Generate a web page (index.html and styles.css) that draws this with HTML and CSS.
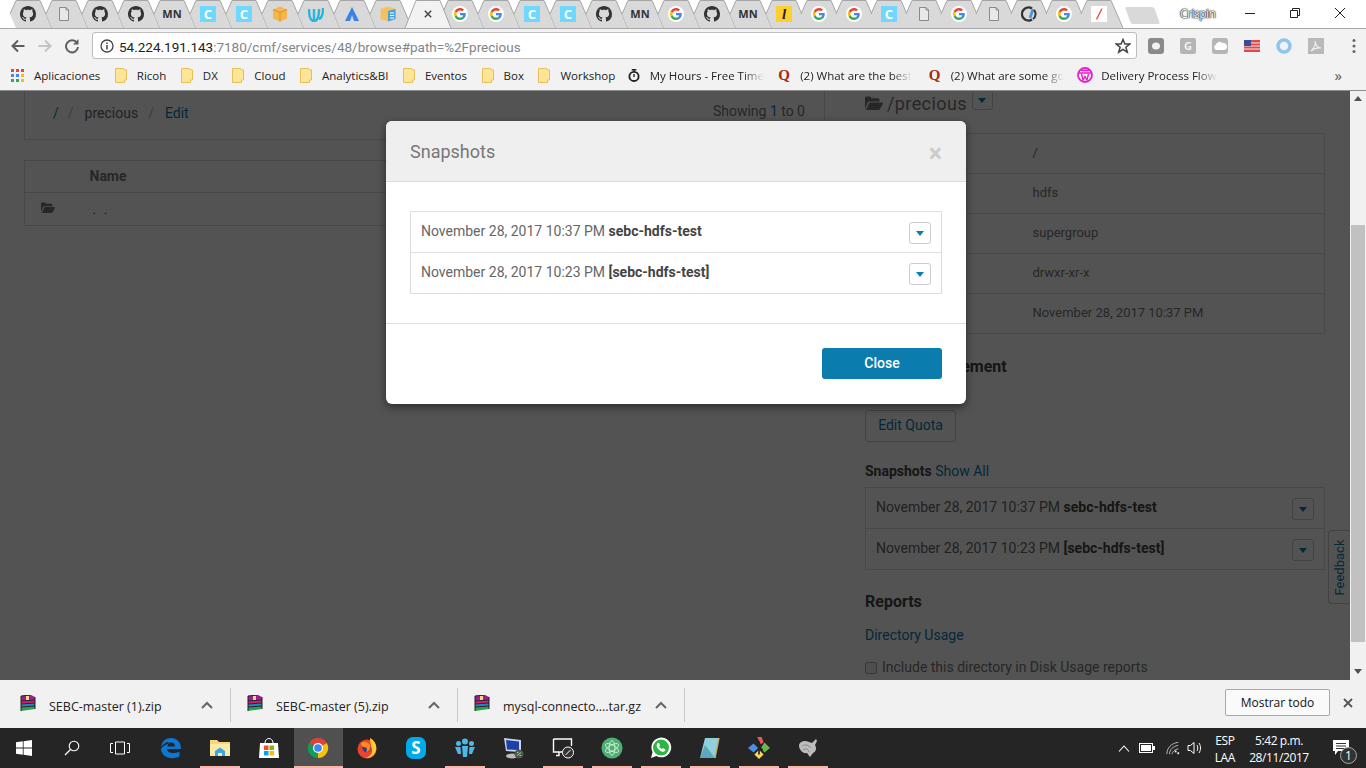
FILE: index.html
```html
<!DOCTYPE html>
<html lang="en">
<head>
  <meta charset="UTF-8">
  <title>Snapshots</title>
  <link rel="stylesheet" href="styles.css">
</head>
<body>

  <!-- shared icons -->
  <svg class="sprite" width="0" height="0">
    <symbol id="i-tab" viewBox="0 0 46 28"><path d="M4 14 10 0H34L46 28H10Z" fill="#d9d9d9"/><path d="M4 14 10 .5H34L46 28" fill="none" stroke="#a6a6a6"/></symbol>
    <symbol id="i-github" viewBox="0 0 16 16"><path fill="#333" d="M8 0C3.58 0 0 3.58 0 8c0 3.54 2.29 6.53 5.47 7.59.4.07.55-.17.55-.38 0-.19-.01-.82-.01-1.49-2.01.37-2.53-.49-2.69-.94-.09-.23-.48-.94-.82-1.13-.28-.15-.68-.52-.01-.53.63-.01 1.08.58 1.23.82.72 1.21 1.87.87 2.33.66.07-.52.28-.87.51-1.07-1.78-.2-3.64-.89-3.64-3.95 0-.87.31-1.59.82-2.15-.08-.2-.36-1.02.08-2.12 0 0 .67-.21 2.2.82.64-.18 1.32-.27 2-.27.68 0 1.36.09 2 .27 1.53-1.04 2.2-.82 2.2-.82.44 1.1.16 1.92.08 2.12.51.56.82 1.27.82 2.15 0 3.07-1.87 3.75-3.65 3.95.29.25.54.73.54 1.48 0 1.07-.01 1.93-.01 2.2 0 .21.15.46.55.38A8.013 8.013 0 0016 8c0-4.42-3.58-8-8-8z"/></symbol>
    <symbol id="i-page" viewBox="0 0 16 16"><path d="M3.5 1.5H10L12.5 4V14.5H3.5Z M10 1.5V4H12.5" fill="#e8e8e8" stroke="#8a8a8a"/></symbol>
    <symbol id="i-google" viewBox="-8 -8 64 64"><circle cx="24" cy="24" r="32" fill="#fff"/><path fill="#EA4335" d="M24 9.5c3.54 0 6.71 1.22 9.21 3.6l6.85-6.85C35.9 2.38 30.47 0 24 0 14.62 0 6.51 5.38 2.56 13.22l7.98 6.19C12.43 13.72 17.74 9.5 24 9.5z"/><path fill="#4285F4" d="M46.98 24.55c0-1.57-.15-3.09-.38-4.55H24v9.02h12.94c-.58 2.96-2.26 5.48-4.78 7.18l7.73 6c4.51-4.18 7.09-10.36 7.09-17.65z"/><path fill="#FBBC05" d="M10.53 28.59c-.48-1.45-.76-2.99-.76-4.59s.27-3.14.76-4.59l-7.98-6.19C.92 16.46 0 20.12 0 24c0 3.88.92 7.54 2.56 10.78l7.97-6.19z"/><path fill="#34A853" d="M24 48c6.48 0 11.93-2.13 16.09-5.81l-7.73-6c-2.15 1.45-4.92 2.3-8.37 2.3-6.26 0-11.57-4.22-13.47-9.91l-7.98 6.19C6.51 42.62 14.62 48 24 48z"/></symbol>
    <symbol id="i-folder" viewBox="0 0 12 15"><path d="M.5.5H8.500L9 1.500 11.500 2V12H9.500V14.500H.5Z" fill="#fde598" stroke="#e6bf58"/></symbol>
    <symbol id="i-open" viewBox="0 0 18 14"><path fill="currentColor" d="M0 13V2C0 1 .7.5 1.5.5H5L6.500 2.300H13C14 2.300 14.500 3 14.500 4V5.500H4.500C3.500 5.500 3 6 2.600 6.800ZM1 14 4 7.300C4.200 6.800 4.700 6.500 5.200 6.500H17C17.800 6.500 18.200 7.200 17.800 7.900L15 13C14.700 13.600 14.200 14 13.500 14Z"/></symbol>
    <symbol id="i-rar" viewBox="0 0 16 16"><path fill="#9c1f8f" d="M1 1 11 0 15 2V5L1 6Z"/><path fill="#d81b70" d="M1 6 15 5V8L1 9Z"/><path fill="#1e88c8" d="M1 9 15 8V11L1 12Z"/><path fill="#2e9e4f" d="M1 12 15 11V14L1 16Z"/><path stroke="#222" fill="none" d="M1 6 15 5M1 9 15 8M1 12 15 11M1 1V16M15 2V14M1 1 11 0"/><rect x="6" y="1" width="3" height="4" fill="#f0d98a"/></symbol>
    <symbol id="i-chev" viewBox="0 0 12 8"><path d="M1 7 6 2 11 7" fill="none" stroke="#666" stroke-width="2"/></symbol>
    <symbol id="i-caret" viewBox="0 0 8 5"><path d="M0 0H8L4 5Z" fill="currentColor"/></symbol>
  </svg>

  <header class="tab-strip">
    <div class="tab"><svg class="tab-bg"><use href="#i-tab"/></svg><svg class="fav"><use href="#i-github"/></svg></div>
    <div class="tab"><svg class="tab-bg"><use href="#i-tab"/></svg><svg class="fav"><use href="#i-page"/></svg></div>
    <div class="tab"><svg class="tab-bg"><use href="#i-tab"/></svg><svg class="fav"><use href="#i-github"/></svg></div>
    <div class="tab"><svg class="tab-bg"><use href="#i-tab"/></svg><svg class="fav"><use href="#i-github"/></svg></div>
    <div class="tab"><svg class="tab-bg"><use href="#i-tab"/></svg><span class="fav fav-mn">MN</span></div>
    <div class="tab"><svg class="tab-bg"><use href="#i-tab"/></svg><span class="fav fav-c">C</span></div>
    <div class="tab"><svg class="tab-bg"><use href="#i-tab"/></svg><span class="fav fav-c">C</span></div>
    <div class="tab"><svg class="tab-bg"><use href="#i-tab"/></svg>
      <svg class="fav" viewBox="0 0 16 16"><path d="M8 .5 15 3.500V12.500L8 15.500 1 12.500V3.500Z" fill="#f5b64c"/><path d="M8 6.500V15.500M1 3.500 8 6.500 15 3.500" stroke="#d9902a" fill="none"/></svg></div>
    <div class="tab"><svg class="tab-bg"><use href="#i-tab"/></svg>
      <svg class="fav" viewBox="0 0 16 16"><path d="M1 3C1 11 3 15 6 15V3M6 15C10 15 11 10 11 3M11 13C14 12 15 7 15 2" fill="none" stroke="#2bb5dc" stroke-width="2.400"/></svg></div>
    <div class="tab"><svg class="tab-bg"><use href="#i-tab"/></svg>
      <svg class="fav" viewBox="0 0 16 16"><path d="M8 1 15 15H10L8 9 6 15H1Z" fill="#3b82e8"/></svg></div>
    <div class="tab"><svg class="tab-bg"><use href="#i-tab"/></svg>
      <svg class="fav" viewBox="0 0 16 16"><path d="M8 .5 15.500 3V13L8 15.500 .5 13V3Z" fill="#f5c060"/><path d="M8 5 15.500 3V13L8 15.500Z" fill="#4aa3d8"/><path d="M10 7H14M10 9.500H14M10 12H14" stroke="#fff"/></svg></div>
    <div class="tab tab-active"><svg class="tab-bg tab-bg-active" viewBox="0 0 46 29"><path d="M0 28 11 .5H35L46 28" fill="#f2f2f2" stroke="#a6a6a6"/></svg>
      <svg class="fav fav-x" viewBox="0 0 10 10"><path d="M1 1 9 9M9 1 1 9" stroke="#444" stroke-width="1.800"/></svg></div>
    <div class="tab"><svg class="tab-bg"><use href="#i-tab"/></svg><svg class="fav"><use href="#i-google"/></svg></div>
    <div class="tab"><svg class="tab-bg"><use href="#i-tab"/></svg><svg class="fav"><use href="#i-google"/></svg></div>
    <div class="tab"><svg class="tab-bg"><use href="#i-tab"/></svg><span class="fav fav-c">C</span></div>
    <div class="tab"><svg class="tab-bg"><use href="#i-tab"/></svg><span class="fav fav-c">C</span></div>
    <div class="tab"><svg class="tab-bg"><use href="#i-tab"/></svg><svg class="fav"><use href="#i-github"/></svg></div>
    <div class="tab"><svg class="tab-bg"><use href="#i-tab"/></svg><span class="fav fav-mn">MN</span></div>
    <div class="tab"><svg class="tab-bg"><use href="#i-tab"/></svg><svg class="fav"><use href="#i-google"/></svg></div>
    <div class="tab"><svg class="tab-bg"><use href="#i-tab"/></svg><svg class="fav"><use href="#i-github"/></svg></div>
    <div class="tab"><svg class="tab-bg"><use href="#i-tab"/></svg><span class="fav fav-mn">MN</span></div>
    <div class="tab tab-thin"><svg class="tab-bg"><use href="#i-tab"/></svg><span class="fav fav-l">l</span></div>
    <div class="tab tab-thin"><svg class="tab-bg"><use href="#i-tab"/></svg><svg class="fav"><use href="#i-google"/></svg></div>
    <div class="tab tab-thin"><svg class="tab-bg"><use href="#i-tab"/></svg><svg class="fav"><use href="#i-google"/></svg></div>
    <div class="tab tab-thin"><svg class="tab-bg"><use href="#i-tab"/></svg><span class="fav fav-c">C</span></div>
    <div class="tab tab-thin"><svg class="tab-bg"><use href="#i-tab"/></svg><svg class="fav"><use href="#i-page"/></svg></div>
    <div class="tab tab-thin"><svg class="tab-bg"><use href="#i-tab"/></svg><svg class="fav"><use href="#i-google"/></svg></div>
    <div class="tab tab-thin"><svg class="tab-bg"><use href="#i-tab"/></svg><svg class="fav"><use href="#i-page"/></svg></div>
    <div class="tab tab-thin"><svg class="tab-bg"><use href="#i-tab"/></svg>
      <svg class="fav" viewBox="0 0 16 16"><path d="M11 2.500A6.500 6.500 0 1 0 11 13.500" fill="none" stroke="#333" stroke-width="2.400"/><path d="M9 12 12 3" stroke="#4a8fe8" stroke-width="2.600"/><path d="M13 4A6 6 0 0 1 12 13" fill="none" stroke="#333" stroke-width="2"/></svg></div>
    <div class="tab tab-thin"><svg class="tab-bg"><use href="#i-tab"/></svg><svg class="fav"><use href="#i-google"/></svg></div>
    <div class="tab tab-thin"><svg class="tab-bg"><use href="#i-tab"/></svg>
      <svg class="fav" viewBox="0 0 16 16"><rect width="16" height="16" fill="#fff"/><path d="M5 13 10 3 11.500 2 11 4 6 14Z" fill="#e8503a"/></svg></div>
    <div class="new-tab"></div>
    <span class="profile">Crispin</span>
    <div class="win-controls">
      <svg class="win-btn" viewBox="0 0 12 12"><path d="M1 6.500H11" stroke="#222"/></svg>
      <svg class="win-btn" viewBox="0 0 12 12"><path d="M1.500 3.500H8.500V10.500H1.500ZM3.500 3.500V1.500H10.500V8.500H8.500" fill="none" stroke="#222"/></svg>
      <svg class="win-btn" viewBox="0 0 12 12"><path d="M1 1 11 11M11 1 1 11" stroke="#222"/></svg>
    </div>
  </header>

  <div class="toolbar">
    <svg class="tool-icon" viewBox="0 0 16 16"><path d="M14.500 8H2.500M8 2.500 2.500 8 8 13.500" fill="none" stroke="#5f5f5f" stroke-width="2"/></svg>
    <svg class="tool-icon" viewBox="0 0 16 16"><path d="M1.500 8H13.500M8 2.500 13.500 8 8 13.500" fill="none" stroke="#c4c4c4" stroke-width="2"/></svg>
    <svg class="tool-icon" viewBox="0 0 16 16"><path d="M13 5A6 6 0 1 0 14 9" fill="none" stroke="#5f5f5f" stroke-width="2"/><path d="M14.500 1V6.500H9Z" fill="#5f5f5f"/></svg>
    <div class="omnibox">
      <svg class="info-icon" viewBox="0 0 14 14"><circle cx="7" cy="7" r="6" fill="none" stroke="#444" stroke-width="1.300"/><path d="M7 6V10.500M7 3.500V5" stroke="#444" stroke-width="1.500"/></svg>
      <span class="url"><span class="url-host">54.224.191.143</span>:7180/cmf/services/48/browse#path=%2Fprecious</span>
      <svg class="star" viewBox="0 0 16 16"><path d="M8 1.500 9.900 6H14.800L10.900 9.200 12.300 14.200 8 11.400 3.700 14.200 5.100 9.200 1.200 6H6.100Z" fill="none" stroke="#444" stroke-width="1.500"/></svg>
    </div>
    <div class="extensions">
      <svg class="ext" viewBox="0 0 16 16"><rect width="16" height="16" rx="3" fill="#8a8a8a"/><ellipse cx="8" cy="8" rx="4" ry="3.500" fill="#f2f2f2"/></svg>
      <span class="ext ext-g">G</span>
      <svg class="ext" viewBox="0 0 16 16"><rect width="16" height="16" rx="3" fill="#b5b5b5"/><path d="M4 12A3 3 0 0 1 4 6.500 3.500 3.500 0 0 1 10 5 3.500 3.500 0 0 1 12.500 12Z" fill="#fff"/></svg>
      <svg class="ext" viewBox="0 0 16 16"><rect y="2" width="16" height="12" fill="#e04a4a"/><path d="M0 5H16M0 8H16M0 11H16" stroke="#eee"/><rect y="2" width="7" height="6" fill="#3a4a9c"/></svg>
      <svg class="ext" viewBox="0 0 16 16"><circle cx="8" cy="8" r="6" fill="none" stroke="#8ec6ee" stroke-width="3.500"/></svg>
      <svg class="ext" viewBox="0 0 16 16"><rect width="16" height="16" fill="#b9b9b9"/><path d="M3 13C6 10 8 6 7 3 7 7 10 10 13 10 10 9.500 6 10.500 3 13Z" fill="none" stroke="#eee" stroke-width="1.200"/></svg>
      <svg class="kebab" viewBox="0 0 4 16"><circle cx="2" cy="2.500" r="1.500" fill="#666"/><circle cx="2" cy="8" r="1.500" fill="#666"/><circle cx="2" cy="13.500" r="1.500" fill="#666"/></svg>
    </div>
  </div>

  <nav class="bookmarks">
    <span class="bm">
      <svg class="bm-icon bm-apps" viewBox="0 0 13 13"><path fill="#e8453c" d="M0 0h3v3H0zM5 0h3v3H5zM10 0h3v3h-3z"/><path fill="#4285f4" d="M5 5h3v3H5zM0 5h3v3H0z"/><path fill="#fbbc05" d="M10 5h3v3h-3zM10 10h3v3h-3z"/><path fill="#34a853" d="M0 10h3v3H0zM5 10h3v3H5z"/></svg>
      Aplicaciones</span>
    <span class="bm"><svg class="bm-icon"><use href="#i-folder"/></svg>Ricoh</span>
    <span class="bm"><svg class="bm-icon"><use href="#i-folder"/></svg>DX</span>
    <span class="bm"><svg class="bm-icon"><use href="#i-folder"/></svg>Cloud</span>
    <span class="bm"><svg class="bm-icon"><use href="#i-folder"/></svg>Analytics&amp;BI</span>
    <span class="bm"><svg class="bm-icon"><use href="#i-folder"/></svg>Eventos</span>
    <span class="bm"><svg class="bm-icon"><use href="#i-folder"/></svg>Box</span>
    <span class="bm"><svg class="bm-icon"><use href="#i-folder"/></svg>Workshop</span>
    <span class="bm bm-fade bm-timer"><svg class="bm-icon" viewBox="0 0 13 14"><circle cx="6.500" cy="8" r="5" fill="none" stroke="#222" stroke-width="2"/><path d="M4 .8H9M6.500 1V3M6.500 5.500V8.500" stroke="#222" stroke-width="1.500"/></svg><span class="bm-clip">My Hours - Free Time</span></span>
    <span class="bm bm-fade"><span class="bm-icon bm-q">Q</span><span class="bm-clip">(2) What are the best</span></span>
    <span class="bm bm-fade bm-fade-short"><span class="bm-icon bm-q">Q</span><span class="bm-clip">(2) What are some go</span></span>
    <span class="bm bm-fade"><svg class="bm-icon bm-pink" viewBox="0 0 16 16"><circle cx="8" cy="8" r="7" fill="none" stroke="#e61fc9" stroke-width="1.800"/><path d="M1 6H15M4 3.500H12M4.500 7 6 13 8 9.500 10 13 11.500 7" fill="none" stroke="#e61fc9" stroke-width="1.400"/></svg><span class="bm-clip">Delivery Process Flow</span></span>
    <span class="bm-more">»</span>
  </nav>

  <div class="viewport">
    <main class="page">
      <div class="page-grid">
        <section class="left-col">
          <div class="crumb-panel">
            <div class="crumbs">
              <a class="link">/</a><span class="sep">/</span><span class="crumb-name">precious</span><span class="sep">/</span><a class="link">Edit</a>
            </div>
            <span class="showing">Showing <span class="link">1</span> to 0</span>
          </div>
          <table class="files">
            <tr><th class="files-icon"></th><th>Name</th></tr>
            <tr><td class="files-icon"><svg class="row-folder"><use href="#i-open"/></svg></td><td class="dots">. .</td></tr>
          </table>
        </section>

        <section class="right-col">
          <div class="dir-title">
            <svg class="dir-folder"><use href="#i-open"/></svg>
            <span class="dir-name">/precious</span>
            <span class="caret-btn caret-btn-top"><svg class="caret"><use href="#i-caret"/></svg></span>
          </div>
          <table class="info">
            <tr><td></td><td>/</td></tr>
            <tr><td></td><td>hdfs</td></tr>
            <tr><td></td><td>supergroup</td></tr>
            <tr><td></td><td>drwxr-xr-x</td></tr>
            <tr><td></td><td>November 28, 2017 10:37 PM</td></tr>
          </table>
          <h4 class="heading heading-quota">Quota Management</h4>
          <a class="quota-btn">Edit Quota</a>
          <p class="snap-title"><b>Snapshots</b> <a class="link">Show All</a></p>
          <ul class="snap-list">
            <li class="snap-row"><span>November 28, 2017 10:37 PM <b>sebc-hdfs-test</b></span><span class="caret-btn"><svg class="caret"><use href="#i-caret"/></svg></span></li>
            <li class="snap-row"><span>November 28, 2017 10:23 PM <b>[sebc-hdfs-test]</b></span><span class="caret-btn"><svg class="caret"><use href="#i-caret"/></svg></span></li>
          </ul>
          <h4 class="heading heading-reports">Reports</h4>
          <a class="link usage">Directory Usage</a>
          <label class="include"><span class="check"></span>Include this directory in Disk Usage reports</label>
        </section>
      </div>

      <a class="feedback"><span>Feedback</span></a>
      <div class="backdrop"></div>

      <div class="modal">
        <div class="modal-head">
          <h3>Snapshots</h3>
          <span class="modal-x">×</span>
        </div>
        <div class="modal-body">
          <ul class="snap-list">
            <li class="snap-row"><span>November 28, 2017 10:37 PM <b>sebc-hdfs-test</b></span><span class="caret-btn"><svg class="caret"><use href="#i-caret"/></svg></span></li>
            <li class="snap-row"><span>November 28, 2017 10:23 PM <b>[sebc-hdfs-test]</b></span><span class="caret-btn"><svg class="caret"><use href="#i-caret"/></svg></span></li>
          </ul>
        </div>
        <div class="modal-foot"><button class="close-btn">Close</button></div>
      </div>
    </main>

    <div class="scrollbar">
      <svg class="sb-arrow" viewBox="0 0 8 5"><path d="M0 5H8L4 0Z" fill="#505050"/></svg>
      <div class="sb-thumb"></div>
      <svg class="sb-arrow" viewBox="0 0 8 5"><path d="M0 0H8L4 5Z" fill="#505050"/></svg>
    </div>
  </div>

  <div class="downloads">
    <div class="dl"><svg class="dl-icon"><use href="#i-rar"/></svg><span class="dl-name">SEBC-master (1).zip</span><svg class="dl-chev"><use href="#i-chev"/></svg></div>
    <div class="dl"><svg class="dl-icon"><use href="#i-rar"/></svg><span class="dl-name">SEBC-master (5).zip</span><svg class="dl-chev"><use href="#i-chev"/></svg></div>
    <div class="dl"><svg class="dl-icon"><use href="#i-rar"/></svg><span class="dl-name">mysql-connecto....tar.gz</span><svg class="dl-chev"><use href="#i-chev"/></svg></div>
    <button class="show-all">Mostrar todo</button>
    <svg class="dl-close" viewBox="0 0 10 10"><path d="M1 1 9 9M9 1 1 9" stroke="#555" stroke-width="1.800"/></svg>
  </div>

  <footer class="taskbar">
    <div class="sys-btn"><svg class="task-icon" viewBox="0 0 16 16"><path fill="#fff" d="M0 2.300 6.800 1.300V7.600H0ZM7.600 1.200 16 0V7.600H7.600ZM0 8.400H6.800V14.700L0 13.700ZM7.600 8.400H16V16L7.600 14.800Z"/></svg></div>
    <div class="sys-btn"><svg class="task-icon" viewBox="0 0 16 16"><circle cx="10" cy="6" r="4.800" fill="none" stroke="#fff" stroke-width="1.100"/><path d="M6.500 9.500 1 15" stroke="#fff" stroke-width="1.300"/></svg></div>
    <div class="sys-btn"><svg class="task-icon task-view" viewBox="0 0 20 14"><path d="M5.500 1H14.500V13H5.500ZM3 2.500H.5V11.500H3M17 2.500H19.500V11.500H17" fill="none" stroke="#fff"/></svg></div>
    <div class="apps">
      <div class="app"><svg class="task-icon task-large" viewBox="0 0 22 22"><path fill="#0a78d4" d="M1 10C2 4 6 1 11 1c6 0 10 4 10 11H7c.3 4 6.500 5.500 12.500 2.500v5C12 23 2 21 1 12c2-3 4-4 7-5 0-1 .5-1.500 1-2C6 5 3 7 1 10ZM7.500 9.500h7.500C15 7 13.500 5.500 11 5.500S8 7 7.500 9.500Z"/></svg></div>
      <div class="app is-running"><svg class="task-icon task-large" viewBox="0 0 22 22"><path fill="#f5d77a" d="M1 3H8L10 5H21V19H1Z"/><path fill="#fbe9a8" d="M1 7H21V19H1Z"/><path fill="#3aa7e0" d="M6 14 11 10.500 16 14V19H13V16H9V19H6Z"/></svg></div>
      <div class="app"><svg class="task-icon task-large" viewBox="0 0 22 22"><path d="M7 6C7 0 15 0 15 6" fill="none" stroke="#fff"/><path fill="#fff" d="M2 6H20L21 21H1Z"/><path fill="#f25022" d="M6 8.500H10.500V13H6Z"/><path fill="#7fba00" d="M11.500 8.500H16V13H11.500Z"/><path fill="#00a4ef" d="M6 14H10.500V18.500H6Z"/><path fill="#ffb900" d="M11.500 14H16V18.500H11.500Z"/></svg></div>
      <div class="app is-active"><svg class="task-icon task-large" viewBox="0 0 24 24"><path fill="#db4437" d="M12 12 2.470 6.500A11 11 0 0 1 21.530 6.500Z"/><path fill="#f4c20d" d="M12 12 21.530 6.500A11 11 0 0 1 12 23Z"/><path fill="#0f9d58" d="M12 12 12 23A11 11 0 0 1 2.470 6.500Z"/><circle cx="12" cy="12" r="5.500" fill="#fff"/><circle cx="12" cy="12" r="4.200" fill="#4285f4"/></svg></div>
      <div class="app"><svg class="task-icon task-large" viewBox="0 0 22 22"><circle cx="11" cy="12" r="9.500" fill="#e8452c"/><path fill="#ffcb2e" d="M14 1C20 4 22 11 19 16 17 20 13 21.500 9 21 14 20 17 16 16 12 15 8 14 5 14 1Z"/><circle cx="10.500" cy="11" r="4.200" fill="#3d3a8c"/><path fill="#ff8a1f" d="M5 6C8 4 12 5 14 8 15 12 13 15 10 15 12 13 11 10 8 10 6 10 5 8 5 6Z"/></svg></div>
      <div class="app"><span class="skype">S</span></div>
      <div class="app is-running"><svg class="task-icon task-large" viewBox="0 0 22 22"><circle cx="11" cy="4.500" r="3" fill="#4db8e8"/><circle cx="4.500" cy="6.500" r="2.500" fill="#4db8e8"/><circle cx="17.500" cy="6.500" r="2.500" fill="#4db8e8"/><path fill="#4db8e8" d="M8 9H14L13 20H9ZM1 10H6.500L7 17H4ZM15.500 10H21L18 17H15Z"/></svg></div>
      <div class="app"><svg class="task-icon task-large" viewBox="0 0 22 22"><path fill="#c8d8f0" d="M1 1 18 3V15L3 14Z"/><path fill="#1f3fa8" d="M3 3 16 4.500V13L4 12.500Z"/><ellipse cx="9" cy="19" rx="6" ry="2.500" fill="#bbb"/><circle cx="16" cy="17" r="4.500" fill="#555"/><path d="M14 18.500 18 15.500M14 15.500H15.500M16.500 18.500H18" stroke="#8ddc6a"/></svg></div>
      <div class="app is-running"><svg class="task-icon task-large" viewBox="0 0 22 22"><path d="M1.500 2H19.500V9M11 15H1.500V2M7 15V18.500H4" fill="none" stroke="#fff" stroke-width="1.400"/><circle cx="16" cy="15.500" r="5.500" fill="#333" stroke="#fff"/><path d="M13.500 18 18.500 13" stroke="#fff"/></svg></div>
      <div class="app is-running"><svg class="task-icon task-large" viewBox="0 0 24 24"><circle cx="12" cy="12" r="11.500" fill="#4cb071"/><g fill="none" stroke="#d8f0df" stroke-width=".9"><ellipse cx="12" cy="12" rx="8" ry="3.200" transform="rotate(30 12 12)"/><ellipse cx="12" cy="12" rx="8" ry="3.200" transform="rotate(-30 12 12)"/><ellipse cx="12" cy="12" rx="8" ry="3.200" transform="rotate(90 12 12)"/></g></svg></div>
      <div class="app is-running"><svg class="task-icon task-large" viewBox="0 0 24 24"><path fill="#fff" d="M1 23 2.800 16.500A10.800 10.800 0 1 1 7 20.800Z"/><circle cx="12" cy="11.500" r="8.700" fill="#2cb742"/><path fill="#fff" d="M8.500 6.500C6.500 8 7 11 9.500 13.500S15 17 16.500 15L16.800 13.500 14 12 13 13C12 12.800 10.500 11.300 10 10L11 9 9.800 6.500Z"/></svg></div>
      <div class="app is-running"><svg class="task-icon task-large" viewBox="0 0 22 22"><path fill="#8fd0dc" d="M6 1H20L16 21H1Z"/><path fill="#3d8ea8" d="M1 21 6 8 16 21Z" opacity=".6"/><path d="M20 1 16 21" stroke="#c9a86a" stroke-width="1.400"/></svg></div>
      <div class="app is-running"><svg class="task-icon task-large" viewBox="0 0 24 24"><path fill="#e8565a" d="M10 0H15L17 6 14 8Z"/><path fill="#4a8fe8" d="M6 7 11 12 6 17 0 12Z"/><path fill="#6ab84e" d="M18 6 24 12 18 17 14 12Z"/><path fill="#f5d762" d="M12 14 17 19 12 24 7 19Z"/><path d="M12 5V19M12 11 16 14" stroke="#222" stroke-width="1.800" fill="none"/></svg></div>
      <div class="app is-running"><svg class="task-icon task-large" viewBox="0 0 22 22"><path fill="#bdbdbd" d="M2 8C3 4 8 3 12 5L15 6 19 2 20 4 18 8C20 11 19 15 16 16L13 20 10 16C6 17 2 13 2 8Z"/><path d="M5 9C8 7 12 8 14 11M6 13C9 11 11 12 12 15" stroke="#888" fill="none"/></svg></div>
    </div>
    <div class="tray">
      <svg class="tray-chev" viewBox="0 0 12 7"><path d="M1 6.500 6 1 11 6.500" fill="none" stroke="#fff" stroke-width="1.100"/></svg>
      <svg class="tray-batt" viewBox="0 0 16 10"><rect x=".5" y=".5" width="13" height="9" fill="none" stroke="#fff"/><rect x="2" y="2" width="10" height="6" fill="#fff"/><rect x="14" y="3" width="2" height="4" fill="#fff"/></svg>
      <svg class="tray-wifi" viewBox="0 0 16 16"><path d="M1 15C1 8 6 2.500 14 1.500M4 15C4 10 8 6 14 5M7 15C7 12.500 10 9.500 14 9" fill="none" stroke="#ccc"/><rect x="10" y="11" width="2" height="2" fill="#fff"/><rect x="13" y="13" width="2" height="2" fill="#fff"/></svg>
      <svg class="tray-vol" viewBox="0 0 16 16"><path d="M1 5.500H3.500L7 2.500V13.500L3.500 10.500H1Z M10 5C11 7 11 9 10 11M12 3C14 6 14 10 12 13" fill="none" stroke="#fff"/></svg>
      <div class="tray-lang"><span>ESP</span><span>LAA</span></div>
      <div class="tray-clock"><span>5:42 p.m.</span><span>28/11/2017</span></div>
      <div class="notif">
        <svg class="notif-icon" viewBox="0 0 16 16"><path fill="#fff" d="M0 0H16V11H5L2 15V11H0Z"/><path d="M3 3.500H13M3 6H13M3 8.500H13" stroke="#333"/></svg>
        <span class="notif-badge">1</span>
      </div>
    </div>
  </footer>

</body>
</html>
```
FILE: styles.css
```css
* {
  box-sizing: border-box;
}

html, body {
  margin: 0;
  height: 768px;
  overflow: hidden;
}

body {
  display: flex;
  flex-direction: column;
  font-family: Roboto, sans-serif;
  font-size: 14px;
  color: #777;
  background: #fff;
}

.sprite {
  position: absolute;
}

/* browser chrome */
.tab-strip {
  display: flex;
  align-items: flex-start;
  height: 29px;
  padding-left: 6px;
  background: #fff;
  border-bottom: 1px solid #a9a9a9;
}

.tab {
  position: relative;
  flex: none;
  width: 36px;
  height: 28px;
}

.tab-thin {
  width: 35px;
}

.tab-active {
  margin: 0 -4px 0 4px;
  z-index: 1;
}

.tab-bg {
  position: absolute;
  top: 0;
  left: 0;
  width: 46px;
  height: 28px;
  overflow: visible;
}

.tab-bg-active {
  left: -1px;
  height: 29px;
}

.fav {
  position: absolute;
  top: 6px;
  left: 14px;
  width: 16px;
  height: 16px;
}

.fav-x {
  top: 10px;
  left: 18px;
  width: 8px;
  height: 8px;
}

.fav-mn {
  width: 20px;
  left: 12px;
  font: bold 11px/16px "Open Sans", sans-serif;
  text-align: center;
  color: #333;
}

.fav-c {
  background: #6ed8ff;
  color: #fff;
  font: bold 13px/16px "Open Sans", sans-serif;
  text-align: center;
}

.fav-l {
  background: #fdd02f;
  color: #222;
  font: italic bold 15px/16px "Liberation Serif", serif;
  text-align: center;
}

.new-tab {
  flex: none;
  width: 29px;
  height: 17px;
  margin: 7px 0 0 16px;
  background: #d9d9d9;
  transform: skewX(20deg);
  border-radius: 2px;
}

.profile {
  flex: none;
  margin: 6px 0 0 23px;
  font: 12px/16px "Open Sans", sans-serif;
  color: #fff;
  letter-spacing: -.5px;
  text-shadow: 0 0 1px #000, 0 0 1px #000, 0 0 2px #333;
}

.win-controls {
  display: flex;
  margin-left: 29px;
  gap: 33px;
  padding-top: 7px;
}

.win-btn {
  width: 12px;
  height: 12px;
}

.toolbar {
  display: flex;
  align-items: center;
  height: 33px;
  padding-left: 10px;
  background: #f2f2f2;
}

.tool-icon {
  flex: none;
  width: 16px;
  height: 16px;
  margin-right: 11px;
}

.omnibox {
  display: flex;
  align-items: center;
  width: 1045px;
  height: 27px;
  margin-left: 1px;
  padding: 0 5px 0 7px;
  background: #fff;
  border: 1px solid #bdbdbd;
  border-radius: 3px;
}

.info-icon {
  flex: none;
  width: 14px;
  height: 14px;
}

.url {
  flex: 1;
  margin: 2px 0 0 5px;
  font: 13.500px Roboto, sans-serif;
  color: #80868b;
}

.url-host {
  color: #222;
}

.star {
  width: 16px;
  height: 16px;
}

.extensions {
  display: flex;
  align-items: center;
  gap: 16px;
  margin-left: 11px;
}

.ext {
  flex: none;
  width: 16px;
  height: 16px;
}

.ext-g {
  background: #b5b5b5;
  border-radius: 2px;
  color: #f2f2f2;
  font: bold 11px/16px "Open Sans", sans-serif;
  text-align: center;
}

.kebab {
  width: 4px;
  height: 16px;
  margin-left: 12px;
}

.bookmarks {
  display: flex;
  align-items: center;
  gap: 14.500px;
  height: 29px;
  padding: 0 0 2px 11px;
  background: #f2f2f2;
  border-bottom: 1px solid #8c8c8c;
  font: 11.500px "Open Sans", sans-serif;
  color: #222;
}

.bm {
  display: flex;
  align-items: center;
  flex: none;
  white-space: nowrap;
}

.bm-icon {
  flex: none;
  width: 12px;
  height: 15px;
  margin-right: 10px;
}

.bm-apps {
  width: 13px;
  height: 13px;
}

.bm-fade {
  width: 136px;
}

.bm-timer {
  margin-left: -2px;
}

.bm-fade-short {
  width: 134px;
}

.bm-clip {
  -webkit-mask-image: linear-gradient(to right, #000 82%, transparent);
  mask-image: linear-gradient(to right, #000 82%, transparent);
}

.bm-q {
  font: bold 15px/15px "Liberation Serif", serif;
  color: #a82a0a;
}

.bm-pink {
  width: 16px;
  height: 16px;
  margin-right: 8px;
}

.bm-more {
  margin-left: auto;
  margin-right: 24px;
  font-size: 15px;
  color: #555;
}

/* page */
.viewport {
  display: flex;
  height: 589px;
}

.page {
  position: relative;
  flex: 1;
  overflow: hidden;
  background: #fff;
}

.page-grid {
  display: flex;
  padding-left: 24px;
}

.link {
  color: #0a7cad;
}

.left-col {
  width: 801px;
  margin-right: 40px;
}

.crumb-panel {
  display: flex;
  justify-content: space-between;
  height: 49px;
  padding: 12px 19px 0 28px;
  border: 1px solid #ddd;
  border-top: 0;
}

.crumbs {
  display: flex;
  line-height: 20px;
}

.sep {
  margin: 0 11px 0 9px;
  color: #bbb;
}

.crumb-name {
  color: #666;
}

.crumb-name + .sep {
  margin: 0 11px 0 10px;
}

.showing {
  margin-top: -2px;
  line-height: 20px;
}

.files {
  width: 100%;
  margin-top: 20px;
  border-collapse: collapse;
  border: 1px solid #ddd;
}

.files th, .files td {
  padding: 0;
  text-align: left;
  border-bottom: 1px solid #ddd;
}

.files th {
  height: 32px;
  padding-bottom: 2px;
}

.files td {
  height: 33px;
}

.files-icon {
  width: 65px;
}

.row-folder {
  display: block;
  width: 14px;
  height: 11px;
  margin: 0 0 3px 16px;
  color: #777;
}

.files .dots {
  padding-left: 3px;
  letter-spacing: 2px;
  color: #555;
}

.right-col {
  width: 460px;
}

.dir-title {
  display: flex;
  align-items: center;
  gap: 4px;
  height: 26px;
  padding-bottom: 2px;
  font-size: 18px;
}

.dir-name {
  letter-spacing: .4px;
}

.dir-folder {
  width: 18px;
  height: 14px;
  color: #777;
}

.caret-btn {
  display: flex;
  align-items: center;
  justify-content: center;
  flex: none;
  width: 22px;
  height: 22px;
  background: #fff;
  border: 1px solid #ccc;
  border-radius: 3px;
}

.snap-row .caret-btn {
  margin-top: 2px;
}

.caret-btn-top {
  align-self: flex-start;
  width: 21px;
  height: 19px;
  margin: 0 0 0 1px;
  border-top: 0;
}

.caret {
  width: 8px;
  height: 5px;
  color: #0a7cad;
}

.info {
  width: 100%;
  margin-top: 16px;
  border-collapse: collapse;
  border: 1px solid #ddd;
  font-size: 13px;
}

.info td {
  height: 40px;
  padding: 0 0 3px;
  border-bottom: 1px solid #ddd;
}

.info td:first-child {
  width: 167px;
}

.heading {
  margin: 0;
  font-size: 16px;
  line-height: 20px;
  color: #444;
}

.heading-quota {
  margin-top: 23px;
}

.quota-btn {
  display: block;
  width: 91px;
  height: 32px;
  margin-top: 33px;
  border: 1px solid #ccc;
  border-radius: 3px;
  text-align: center;
  line-height: 28px;
  color: #0a7cad;
}

.snap-title {
  margin: 19px 0 0;
  line-height: 20px;
  color: #444;
}

.snap-list {
  margin: 6px 0 0;
  padding: 0;
  list-style: none;
  border: 1px solid #ddd;
}

.snap-row {
  display: flex;
  align-items: center;
  justify-content: space-between;
  height: 40px;
  padding: 0 10px 0 10px;
  color: #666;
}

.snap-row + .snap-row {
  height: 41px;
  border-top: 1px solid #ddd;
}

.snap-row > span:first-child {
  margin-top: -2px;
}

.snap-row b {
  color: #444;
}

.heading-reports {
  margin-top: 22px;
}

.usage {
  display: block;
  margin-top: 13px;
  line-height: 20px;
}

.include {
  display: flex;
  align-items: center;
  margin-top: 12px;
  line-height: 20px;
}

.check {
  width: 12px;
  height: 12px;
  margin: 2px 5px 0 0;
  border: 1px solid #aaa;
  border-radius: 2px;
  background: #eee;
}

.feedback {
  position: absolute;
  right: 0;
  top: 439px;
  display: flex;
  align-items: center;
  justify-content: center;
  width: 22px;
  height: 74px;
  border: 1px solid #ccc;
  border-right: 0;
  border-radius: 4px 0 0 4px;
  color: #0a7cad;
  font-size: 13px;
}

.feedback span {
  transform: rotate(-90deg);
}

.backdrop {
  position: absolute;
  inset: 0;
  background: rgba(0, 0, 0, .675);
}

/* dialog */
.modal {
  position: absolute;
  top: 30px;
  left: 386px;
  width: 580px;
  height: 283px;
  background: #fff;
  border-radius: 6px;
  overflow: hidden;
  box-shadow: 0 3px 9px rgba(0, 0, 0, .5);
}

.modal-head {
  display: flex;
  align-items: center;
  justify-content: space-between;
  height: 61px;
  padding: 0 24px;
  background: #f0eff0;
  border-bottom: 1px solid #ddd;
}

.modal-head h3 {
  margin: 0;
  font-size: 18px;
  font-weight: 400;
  color: #777;
}

.modal-x {
  margin: 6px 0 0;
  font-size: 25px;
  font-weight: 700;
  line-height: 20px;
  color: #ccc;
}

.modal-body {
  height: 142px;
  padding: 29px 24px 0;
  border-bottom: 1px solid #ddd;
}

.modal-body .snap-list {
  margin: 0;
}

.modal-foot {
  display: flex;
  justify-content: flex-end;
  padding: 24px 24px 0;
}

.close-btn {
  width: 120px;
  height: 31px;
  padding-bottom: 3px;
  background: #0a7cad;
  color: #fff;
  border: 0;
  border-radius: 3px;
  font: 500 14px Roboto, sans-serif;
}

/* page scrollbar */
.scrollbar {
  display: flex;
  flex-direction: column;
  align-items: center;
  width: 16px;
  background: #f1f1f1;
}

.sb-arrow {
  flex: none;
  width: 8px;
  height: 5px;
  margin-top: 5px;
}

.sb-thumb {
  width: 14px;
  height: 417px;
  margin: 124px 0 22px;
  background: #c1c1c1;
}

/* download shelf */
.downloads {
  display: flex;
  align-items: center;
  height: 48px;
  background: #f1f1f1;
  font: 12.5px "Open Sans", sans-serif;
  color: #222;
}

.dl {
  display: flex;
  align-items: center;
  width: 227px;
  height: 34px;
  padding: 0 17px 0 16px;
  border-right: 1px solid #c8c8c8;
  margin-top: 2px;
}

.dl:first-child {
  width: 231px;
  padding-left: 20px;
}

.dl-icon {
  flex: none;
  width: 16px;
  height: 16px;
  margin: -5px 13px 0 0;
}

.dl-name {
  flex: 1;
  padding-top: 2px;
  white-space: nowrap;
}

.dl-chev {
  flex: none;
  width: 12px;
  height: 8px;
}

.show-all {
  width: 105px;
  height: 27px;
  margin: -3px 0 0 auto;
  background: #fafafa;
  border: 1px solid #a8a8a8;
  border-radius: 2px;
  font: 12px "Open Sans", sans-serif;
  color: #111;
}

.dl-close {
  width: 10px;
  height: 10px;
  margin: -2px 13px 0 13px;
}

/* windows taskbar */
.taskbar {
  display: flex;
  height: 40px;
  background: #252525;
  color: #fff;
  font: 12px "Open Sans", sans-serif;
}

.sys-btn {
  display: flex;
  align-items: center;
  justify-content: center;
  width: 48px;
}

.apps {
  display: flex;
  margin-left: 2.500px;
}

.app {
  position: relative;
  display: flex;
  align-items: center;
  justify-content: center;
  width: 49px;
}

.is-active {
  background: #505050;
}

.is-running::after, .is-active::after {
  content: "";
  position: absolute;
  left: 4px;
  right: 5px;
  bottom: 0;
  height: 2px;
  background: #f9b5a8;
}

.is-active::after {
  left: 0;
  right: 0;
}

.task-icon {
  width: 16px;
  height: 16px;
}

.task-view {
  width: 20px;
  height: 14px;
}

.task-large {
  width: 22px;
  height: 22px;
}

.skype {
  width: 20px;
  height: 22px;
  border-radius: 7px;
  background: #00a9e8;
  font: bold 17px/22px "Open Sans", sans-serif;
  text-align: center;
}

.tray {
  display: flex;
  align-items: center;
  margin-left: auto;
}

.tray-chev {
  width: 12px;
  height: 7px;
  margin-right: 9px;
}

.tray-batt {
  width: 16px;
  height: 10px;
  margin-right: 11px;
}

.tray-wifi {
  width: 14px;
  height: 14px;
  margin-right: 7px;
}

.tray-vol {
  width: 16px;
  height: 16px;
  margin-right: 12px;
}

.tray-lang, .tray-clock {
  display: flex;
  flex-direction: column;
  align-items: center;
  padding-top: 2px;
  line-height: 17px;
  letter-spacing: -.4px;
}

.tray-clock {
  width: 70px;
  margin-left: 9px;
}

.notif {
  position: relative;
  width: 36px;
  margin-left: 10px;
  margin-right: 6px;
  height: 40px;
}

.notif-icon {
  position: absolute;
  top: 12px;
  left: 9px;
  width: 16px;
  height: 16px;
}

.notif-badge {
  position: absolute;
  top: 19px;
  left: 16px;
  width: 17px;
  height: 17px;
  border-radius: 50%;
  border: 1px solid #aaa;
  background: #333;
  text-align: center;
  line-height: 15px;
}
```
